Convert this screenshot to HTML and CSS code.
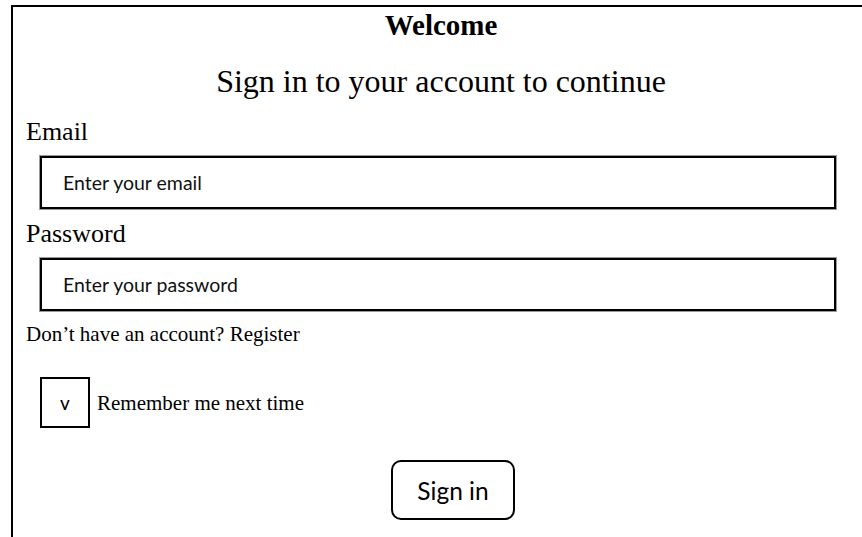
FILE: index.html
```html
<!DOCTYPE html>
<html lang="en">
<head>
<meta charset="utf-8">
<title>Sign in</title>
<link rel="stylesheet" href="styles.css">
</head>
<body>
  <main class="panel">
    <h1 class="title">Welcome</h1>
    <p class="subtitle">Sign in to your account to continue</p>
    <form class="form">
      <label class="field-label" for="email">Email</label>
      <input class="field" id="email" type="email" placeholder="Enter your email">
      <label class="field-label" for="password">Password</label>
      <input class="field" id="password" type="password" placeholder="Enter your password">
      <p class="register">Don’t have an account? Register</p>
      <div class="remember">
        <span class="check">v</span>
        <span class="remember-text">Remember me next time</span>
      </div>
      <div class="actions">
        <button class="submit" type="button">Sign in</button>
      </div>
    </form>
  </main>
</body>
</html>
```

FILE: styles.css
```css
html, body {
  margin: 0;
  padding: 0;
  overflow: hidden;
  background: #fff;
}

body {
  font-family: "Liberation Serif", "Times New Roman", serif;
  color: #000;
}

/* open frame: top and left rules, running off the right and bottom edges */
.panel {
  box-sizing: border-box;
  width: calc(100% - 11px);
  height: calc(100vh - 5px);
  margin: 5px 0 0 11px;
  padding: 0 6px 0 13px;
  border-top: 2px solid #000;
  border-left: 2px solid #000;
}

.title {
  margin: 0;
  font-size: 29px;
  line-height: 36px;
  font-weight: bold;
  text-align: center;
}

.subtitle {
  margin: 18px 0 0;
  font-size: 32px;
  line-height: 40px;
  text-align: center;
}

.form {
  display: flex;
  flex-direction: column;
  align-items: flex-start;
  margin-top: 16px;
}

.field-label {
  font-size: 26px;
  line-height: 30px;
}

.field {
  box-sizing: border-box;
  width: 796px;
  height: 53px;
  margin: 9px 0 10px 14px;
  padding: 0 0 0 21px;
  border: 2px solid #000;
  box-shadow: 0 0 0 1px #9a9a9a;
  border-radius: 0;
  outline: none;
  font-family: Lato, "Open Sans", sans-serif;
  font-size: 19.5px;
  color: #000;
  background: #fff;
}

.field::placeholder {
  color: #111;
  opacity: 1;
}

.register {
  margin: 1px 0 0;
  font-size: 21px;
  line-height: 24px;
}

.remember {
  display: flex;
  align-items: center;
  gap: 7px;
  margin: 31px 0 0 14px;
}

.check {
  box-sizing: border-box;
  display: flex;
  align-items: center;
  justify-content: center;
  width: 50px;
  height: 51px;
  border: 2px solid #000;
  font-family: Lato, "Open Sans", sans-serif;
  font-size: 19px;
}

.remember-text {
  font-size: 21px;
  line-height: 24px;
}

.actions {
  margin: 32px 0 0 365px;
}

.submit {
  box-sizing: border-box;
  width: 124px;
  height: 60px;
  padding: 0;
  border: 2px solid #000;
  border-radius: 10px;
  background: #fff;
  color: #000;
  font-family: Lato, "Open Sans", sans-serif;
  font-size: 24.5px;
  cursor: pointer;
}
```
